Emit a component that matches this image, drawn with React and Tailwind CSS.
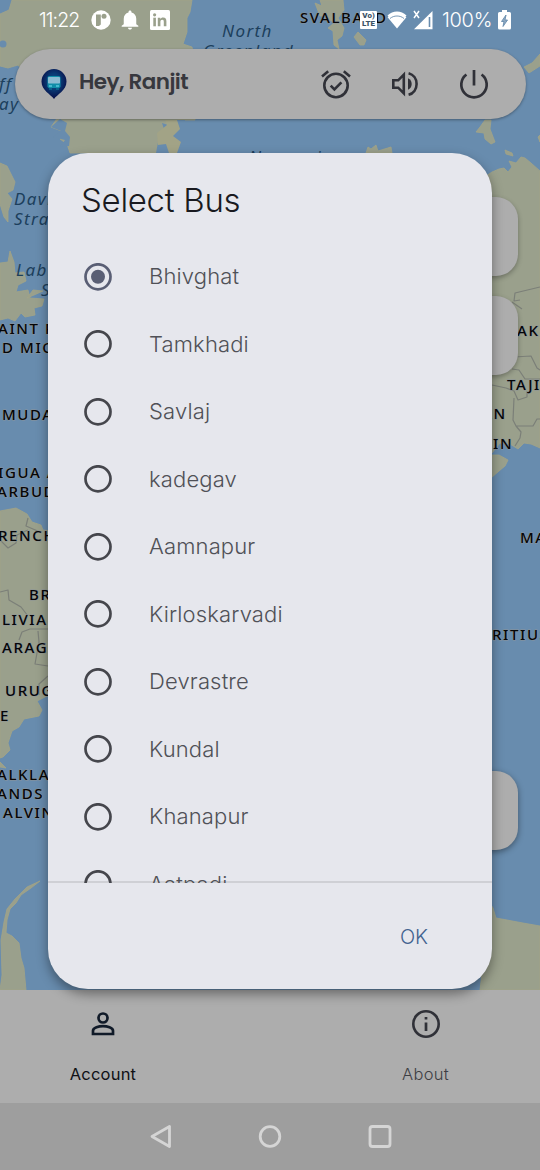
import React from "react";

const stops = [
  "Bhivghat",
  "Tamkhadi",
  "Savlaj",
  "kadegav",
  "Aamnapur",
  "Kirloskarvadi",
  "Devrastre",
  "Kundal",
  "Khanapur",
  "Aatpadi",
];

const seas = [
  [222, 37, "North"],
  [203, 57, "Greenland"],
  [-1, 90, "ff"],
  [-1, 110, "ay"],
  [14, 205, "Davis"],
  [14, 225, "Strait"],
  [16, 276, "Labrador"],
  [41, 296, "Sea"],
  [249, 163, "Norwegian"],
];

const countries = [
  [300, 23, "SVALBARD"],
  [-2, 334, "AINT PIERRE"],
  [2, 353, "D MIQUELON"],
  [2, 420, "MUDA"],
  [-2, 478, "IGUA AND"],
  [-3, 497, "ARBUDA"],
  [-2, 541, "RENCH"],
  [29, 600, "BRAZIL"],
  [2, 625, "LIVIA"],
  [2, 653, "ARAGUAY"],
  [5, 696, "URUGUAY"],
  [0, 721, "E"],
  [-3, 780, "ALKLAND"],
  [-3, 799, "ANDS"],
  [3, 818, "ALVINAS"],
  [517, 336, "AKH"],
  [507, 390, "TAJIK"],
  [482, 419, "AN"],
  [493, 449, "IN"],
  [520, 543, "MALD"],
  [492, 640, "RITIUS"],
];

const land = [
  "M12 0H192L190 12 187 18 187 32 183 44 192 47 195 60V120H178L182 130 174 134 181 142 177 153H70L67 144 60 139 67 133 51 127 56 120 70 80H30L18 65 8 68 0 66V14L9 10Z",
  "M0 163L7 166 15 182 13 190 7 193 12 199 8 211 8 222 4 217 0 204Z",
  "M0 263L8 262 10 251 14 262 15 273 24 272 26 281 18 285 16 292 28 290 30 298 44 299 42 306 34 308 35 315 25 317 21 313 15 321 8 318 0 320Z",
  "M27 298L33 290 43 291 34 295Z",
  "M0 511L16 508 27 514 32 522 41 525 43 530 60 532V690L45 697 37 701 42 710 39 716 24 719 19 727 12 731 8 743 10 750 3 757 0 758Z",
  "M0 762L6 768 0 767Z",
  "M40 881L31 888 21 895 16 903 10 909 7 920 6 933 12 936 19 943 21 958 24 968 26 990H0L2 975 1 940 4 922 7 909 15 899 27 887Z",
  "M315 3L322 6 320 0H343L344 10 338 18 344 28 342 36 337 40 339 49 334 45 333 31 328 28 334 23 325 16 320 16Z",
  "M354 37L358 32 366 40 364 45 360 45Z",
  "M366 153L368 147 371 149 376 145 378 151 391 147 392 153Z",
  "M485 120L491 120 490 129 495 142 491 144 485 139 484 133 476 132 480 127Z",
  "M505 150L512 153 513 156 506 154Z",
  "M524 67L532 63 540 54V66L529 73Z",
  "M538 137L540 135V142Z",
  "M480 180L492 172 499 169 504 168 508 172 512 167 509 161 516 163 521 157 525 158 531 163 540 171V448L531 444 524 443 518 449 510 444 500 443 492 453 480 453Z",
  "M490 455L499 455 508 460 505 466 499 471 491 478Z",
  "M490 903L493 908 496 918 507 920 523 923 540 926V990H480Z",
];

const borders =
  "M540 287L515 293 514 301 520 300M512 302L522 309M514 357L531 356 537 368 540 370M512 369L519 370 525 379 540 379M492 385L506 388 514 391 518 400 527 397 527 391M514 398L513 420 516 426 533 426 537 419 540 419M516 426L521 432 520 438 515 446M28 518L26 526 40 532M0 540L8 548 16 543 17 535 28 530M0 592L8 590 9 600 21 607 28 616M48 629H30L22 632 19 640M38 631L39 642 35 664 48 666M48 676L39 684 39 695";

function WorldMap() {
  return (
    <svg className="absolute inset-0 h-full w-full" viewBox="0 0 540 990" preserveAspectRatio="none">
      <rect width="540" height="990" fill="#688cae" />
      <g fill="#9aa08c" stroke="#a2a386" strokeWidth="0.8" strokeLinejoin="round">
        {land.map((d) => (
          <path key={d} d={d} />
        ))}
      </g>
      <circle cx="3" cy="44" r="3.5" fill="#688cae" />
      <path d="M156 153l3-16 6-5-3-9 9 3 2-6h12v33z" fill="#688cae" />
      <path d="M157 133l10-8-2-5h12l3 9-7 7 8 6-4 11h-8l-3-9-8 1z" fill="#a2a386" />
      <path d="M51 127l10 4-8 6 12 3-5 7 9-1 1-9-5-6 2-8-7-4z" fill="#688cae" />
      <path d={borders} fill="none" stroke="#7b7f78" strokeWidth="1.2" strokeLinejoin="round" />
      <g className="font-['Noto_Sans'] text-[17px] italic tracking-[1.4px]" fill="#1c3f5c">
        {seas.map(([x, y, t]) => (
          <text key={t} x={x} y={y}>
            {t}
          </text>
        ))}
      </g>
      <g
        className="font-['Noto_Sans'] text-[15px] font-medium tracking-[1.6px]"
        fill="#050608"
        stroke="#8d949a"
        strokeWidth="1"
        paintOrder="stroke"
      >
        {countries.map(([x, y, t]) => (
          <text key={t} x={x} y={y}>
            {t}
          </text>
        ))}
      </g>
    </svg>
  );
}

function StatusBar() {
  return (
    <div className="relative flex h-[49px] items-start pt-2 text-white">
      <span className="ml-[39px] w-[52px] font-['Inter'] text-[19.5px] font-light leading-6 tracking-[-0.9px]">11:22</span>
      <svg className="mt-[2px] h-5 w-5" viewBox="0 0 20 20">
        <circle cx="10" cy="10" r="9.7" fill="#fff" />
        <path d="M5 4.500h4.800V14.500L8 16H5z" fill="#9aa08c" />
        <circle cx="13" cy="6.2" r="2.5" fill="#9aa08c" />
      </svg>
      <svg className="ml-[9px] mt-[2px] h-5 w-5" viewBox="0 0 24 24" fill="#fff">
        <path d="M12 23.5c1.4 0 2.4-1 2.4-2.3H9.600c0 1.300 1 2.300 2.400 2.300zM19.500 17v-6.500c0-3.700-2.200-6.600-5.700-7.400v-.8c0-1-.8-1.800-1.800-1.800s-1.800.8-1.800 1.800v.8C6.700 3.900 4.500 6.800 4.500 10.500V17L2 19v1.200h20V19z" />
      </svg>
      <svg className="ml-[10px] mt-[2px] h-5 w-5" viewBox="0 0 20 20">
        <rect width="20" height="20" rx="1.5" fill="#fff" />
        <g fill="#9aa08c">
          <path d="M3.300 7.700h2.600v8.600H3.300z" />
          <circle cx="4.600" cy="4.800" r="1.600" />
          <path d="M7.800 7.700h2.500v1.200c.5-.9 1.500-1.500 2.800-1.500 2.500 0 3.300 1.600 3.300 4v4.900h-2.600v-4.400c0-1.300-.3-2.200-1.500-2.200-1.300 0-1.900.9-1.900 2.200v4.400H7.800z" />
        </g>
      </svg>
      <div className="ml-[190px] mt-[3px] flex h-[18px] w-[17px] flex-col items-center justify-center rounded-[1px] bg-white font-['Roboto'] text-[8px] font-black leading-[8px] text-[#3d5468]">
        <span>Vo)</span>
        <span>LTE</span>
      </div>
      <svg className="ml-[9px] mt-[3px] h-[18px] w-[22px]" viewBox="0 0 22 18">
        <path d="M11 17.600L1.600 6.200C4 3.500 7.200 2 11 2s7 1.500 9.400 4.200z" fill="#fff" />
        <path d="M2.500 5.500C5 3.200 7.800 2 11 2s6 1.200 8.500 3.500" fill="none" stroke="#fff" strokeWidth="3" />
        <path d="M4 7.500C6 5.800 8.400 5 11 5s5 .8 7 2.500" fill="none" stroke="#688cae" strokeWidth="0.9" />
      </svg>
      <svg className="ml-[5px] mt-[2px] h-5 w-[21px]" viewBox="0 0 21 20">
        <path d="M1 1l5 7M6 1L1 8" stroke="#fff" strokeWidth="1.500" />
        <path d="M19.500 1v18.200H1z" fill="#fff" />
        <path d="M16.500 7V17" stroke="#688cae" strokeWidth="1.600" />
      </svg>
      <span className="ml-[8px] w-[56px] font-['Inter'] text-[20px] font-light leading-6 tracking-[-0.3px]">100%</span>
      <svg className="mt-[2px] h-5 w-[13px]" viewBox="0 0 13 20">
        <path d="M4 0h5v2h2.500A1.500 1.500 0 0 1 13 3.500V18a1.500 1.500 0 0 1-1.500 1.500h-10A1.500 1.500 0 0 1 0 18V3.500A1.500 1.500 0 0 1 1.500 2H4z" fill="#fff" />
        <path d="M8 5L3.500 11.500H6L5 16.500 9.500 10H7z" fill="#8fa9c2" stroke="#688cae" strokeWidth="0.9" />
      </svg>
    </div>
  );
}

function Header() {
  return (
    <header className="relative ml-[15px] mr-[14px] flex h-[70px] items-center rounded-full bg-[#adadad] shadow-[0_1px_3px_rgba(0,0,0,0.35)]">
      <svg className="ml-[26px] h-[31px] w-[26px] shrink-0" viewBox="0 0 26 31">
        <defs>
          <radialGradient id="pin" cx="50%" cy="42%" r="55%">
            <stop offset="0" stopColor="#0a5c8c" />
            <stop offset="0.5" stopColor="#0a3a74" />
            <stop offset="1" stopColor="#080f49" />
          </radialGradient>
        </defs>
        <path d="M13 30C10 25.500.5 21.500.5 12.500a12.500 12.500 0 0 1 25 0c0 9-9.500 13-12.500 17.500z" fill="url(#pin)" />
        <rect x="6.500" y="7" width="13" height="12" rx="1.800" fill="#108ea8" />
        <rect x="7" y="8" width="12" height="6.500" rx="0.8" fill="#8bbcd2" />
        <path d="M8 17h3M15 17h3" stroke="#56c8dc" strokeWidth="1.300" />
        <path d="M8 20h3M15 20h3" stroke="#0b6d90" strokeWidth="1.600" />
      </svg>
      <h1 className="mb-1 ml-3 w-[120px] shrink-0 whitespace-nowrap font-['Poppins','Inter'] text-[21.5px] font-semibold leading-8 tracking-[-0.55px] text-[#37383e]">
        Hey, Ranjit
      </h1>
      <svg className="ml-[121px] h-8 w-8 shrink-0" viewBox="0 0 32 32" fill="none" stroke="#303138" strokeWidth="2.600">
        <circle cx="16" cy="17.500" r="11.700" />
        <path d="M10.700 17.700l3.700 3.700 7-7M2 8.500l6.200-5.200M30 8.500l-6.200-5.200" />
      </svg>
      <svg className="ml-[37px] h-8 w-8 shrink-0" viewBox="0 0 32 32" fill="none" stroke="#303138" strokeWidth="2.600">
        <path d="M4.300 12.300h4.900l5.600-5.600v18.600l-5.600-5.600H4.300zM19.600 5.200c4.800 1.300 8 5.600 8 10.800s-3.200 9.500-8 10.800" />
        <path d="M19 10.300c2.400 1 3.700 3.200 3.700 5.700s-1.300 4.700-3.700 5.700z" fill="#303138" stroke="none" />
      </svg>
      <svg className="ml-[37px] h-8 w-8 shrink-0" viewBox="0 0 32 32" fill="none" stroke="#303138" strokeWidth="2.700">
        <path d="M16 2v15.500M8.400 6.500a12.700 12.700 0 1 0 15.200 0" />
      </svg>
    </header>
  );
}

function BottomNav() {
  return (
    <nav className="flex h-[113px] justify-between bg-[#adadad] font-['Inter'] text-[16.5px]">
      <div className="flex w-[206px] flex-col items-center pt-[18px] text-[#101116]">
        <svg className="h-8 w-8" viewBox="0 0 32 32" fill="none" stroke="#101a28" strokeWidth="2.700">
          <circle cx="16" cy="10" r="4.500" />
          <path d="M6 26v-3.300c0-3 6-4.600 10-4.600s10 1.600 10 4.600V26z" />
        </svg>
        <span className="mt-[22px] leading-6 tracking-[0.2px]">Account</span>
      </div>
      <div className="flex w-[229px] flex-col items-center pt-[18px] text-[#3d3e43]">
        <svg className="h-8 w-8" viewBox="0 0 32 32" fill="none" stroke="#303138" strokeWidth="2.600">
          <circle cx="16" cy="16" r="12.700" />
          <path d="M16 14.500v8.500M16 9v2.600" strokeWidth="2.700" />
        </svg>
        <span className="mt-[22px] font-light leading-6 tracking-[0.3px]">About</span>
      </div>
    </nav>
  );
}

function SystemNav() {
  return (
    <div className="flex h-[67px] items-center justify-center gap-[82px] bg-[#9e9e9e] text-[#d5d5d5]">
      <svg className="h-7 w-7" viewBox="0 0 28 28" fill="none" stroke="currentColor" strokeWidth="2.800" strokeLinejoin="round">
        <path d="M6 13.500L23.500 3.500v20z" />
      </svg>
      <svg className="h-7 w-7" viewBox="0 0 28 28" fill="none" stroke="currentColor" strokeWidth="2.800">
        <circle cx="14" cy="13.500" r="9.800" />
      </svg>
      <svg className="h-7 w-7" viewBox="0 0 28 28" fill="none" stroke="currentColor" strokeWidth="2.800">
        <rect x="4" y="3.500" width="20" height="20" rx="2.500" />
      </svg>
    </div>
  );
}

function BusDialog() {
  return (
    <div
      role="dialog"
      aria-label="Select Bus"
      className="absolute left-[48px] top-[153px] flex h-[836px] w-[444px] flex-col rounded-[40px] bg-[#e6e7ed] font-['Inter'] shadow-[0_5px_12px_rgba(0,0,0,0.4)]"
    >
      <h2 className="h-[90px] pl-[33px] pt-[27px] text-[33px] font-light leading-10 tracking-[-0.3px] text-[#191a20]">Select Bus</h2>
      <ul className="relative h-[640px] overflow-hidden">
        {stops.map((name, i) => (
          <li key={name} className="flex h-[67.5px] items-center pl-[36px]">
            <svg className="h-7 w-7" viewBox="0 0 28 28" fill="none" stroke={i === 0 ? "#595e74" : "#45464c"} strokeWidth="2.700">
              <circle cx="14" cy="13.800" r="12.500" />
              {i === 0 && <circle cx="14" cy="13.800" r="7" fill="#595e74" stroke="none" />}
            </svg>
            <span className="ml-[37px] text-[22px] font-light tracking-[0.15px] text-[#505157]">{name}</span>
          </li>
        ))}
      </ul>
      <div className="-mt-[2px] flex flex-1 items-center justify-end border-t-2 border-[#cfd0d5] pr-[64px]">
        <button className="pt-[2px] text-[20px] font-light text-[#42628f]">OK</button>
      </div>
    </div>
  );
}

export default function App() {
  return (
    <div className="relative flex h-[1170px] w-[540px] flex-col overflow-hidden">
      <main className="relative h-[990px] overflow-hidden">
        <WorldMap />
        <div className="absolute left-[438px] top-[197px] h-[79px] w-[80px] rounded-[22px] bg-[#adadad] shadow-[0_2px_5px_rgba(0,0,0,0.3)]" />
        <div className="absolute left-[438px] top-[296px] h-[79px] w-[80px] rounded-[22px] bg-[#adadad] shadow-[0_2px_5px_rgba(0,0,0,0.3)]" />
        <div className="absolute left-[438px] top-[771px] h-[79px] w-[80px] rounded-[22px] bg-[#adadad] shadow-[0_2px_6px_rgba(0,0,0,0.4)]" />
        <StatusBar />
        <Header />
      </main>
      <BottomNav />
      <SystemNav />
      <BusDialog />
    </div>
  );
}
